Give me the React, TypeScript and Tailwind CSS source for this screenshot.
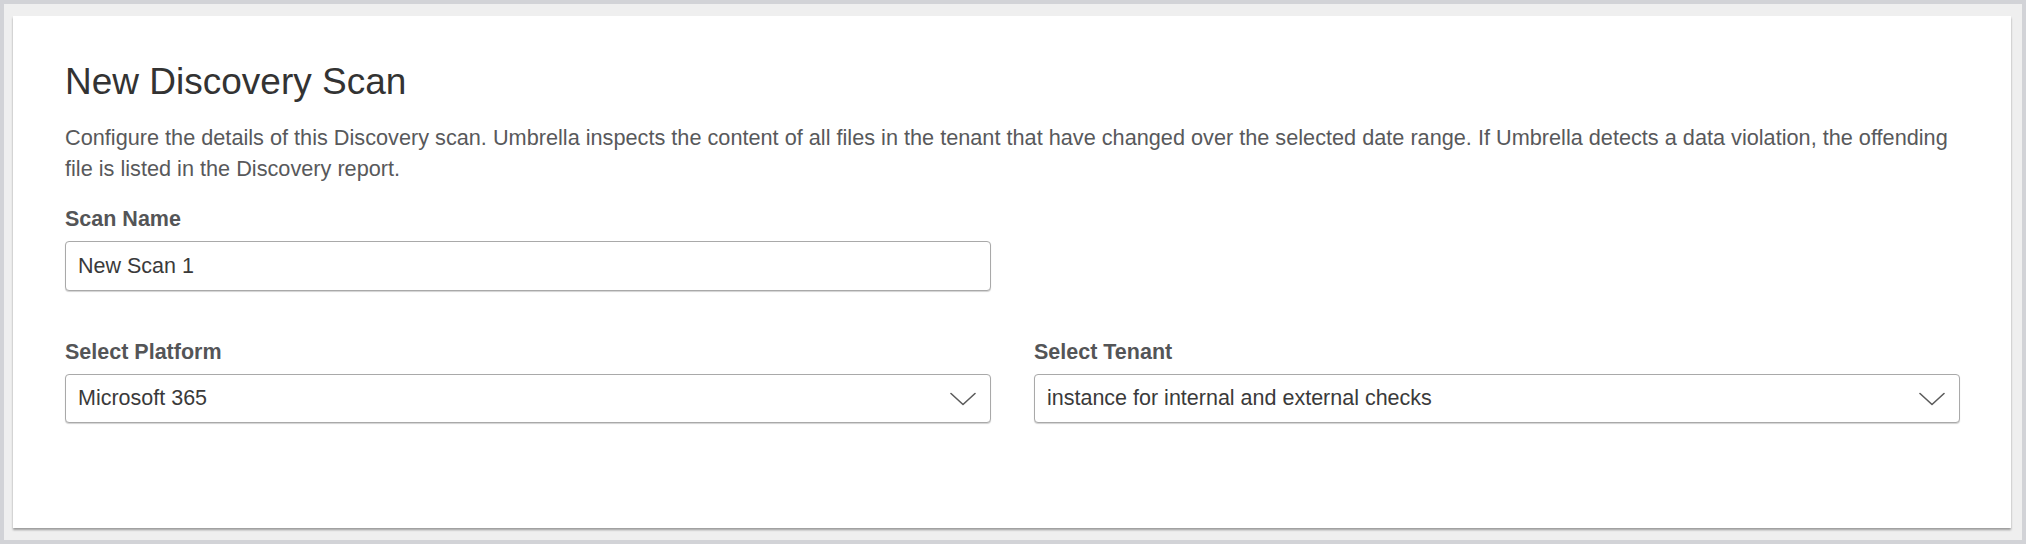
import React from 'react';

const font = { fontFamily: '"Liberation Sans", Arial, sans-serif' };

function Chevron() {
  return (
    <svg width="26" height="14" viewBox="0 0 26 14" fill="none" className="shrink-0">
      <polyline points="1,1.5 13,12.5 25,1.5" stroke="#5b5b5b" strokeWidth="1.6" strokeLinecap="round" strokeLinejoin="round" />
    </svg>
  );
}

function Field({ label, children }: { label: string; children: React.ReactNode }) {
  return (
    <div className="flex flex-col">
      <label className="text-[21.5px] leading-[26px] font-bold text-[#545557]">{label}</label>
      <div className="mt-[9px]">{children}</div>
    </div>
  );
}

function SelectBox({ value }: { value: string }) {
  return (
    <div className="h-[49px] flex items-center justify-between pl-[12px] pr-[14px] bg-white border border-[#a9a9a9] rounded-[4px] shadow-[0_1px_1px_rgba(0,0,0,0.18)]">
      <span className="text-[21.5px] text-[#3a3a3a]">{value}</span>
      <Chevron />
    </div>
  );
}

export default function App() {
  return (
    <div style={font} className="w-[2026px] h-[544px] border-4 border-[#d2d3d7] bg-[#efefef] pl-[9px] pr-[11px] pt-[12px] pb-[12px]">
      <div className="h-full bg-white shadow-[0_2px_2px_rgba(0,0,0,0.35)] pl-[52px] pr-[51px] pt-[44px]">
        <h1 className="text-[37px] leading-[44px] font-normal text-[#333333]">New Discovery Scan</h1>
        <div className="mt-[18px] text-[21.7px] leading-[31px] text-[#58595b]">
          <p className="whitespace-nowrap">
            Configure the details of this Discovery scan. Umbrella inspects the content of all files in the tenant that have changed over the selected date range. If Umbrella detects a data violation, the offending
          </p>
          <p className="whitespace-nowrap">file is listed in the Discovery report.</p>
        </div>

        <div className="mt-[22px] w-[926px]">
          <Field label="Scan Name">
            <div className="h-[50px] flex items-center pl-[12px] bg-white border border-[#a9a9a9] rounded-[4px] shadow-[0_1px_1px_rgba(0,0,0,0.18)]">
              <span className="text-[21.5px] text-[#3a3a3a]">New Scan 1</span>
            </div>
          </Field>
        </div>

        <div className="mt-[48px] grid grid-cols-2 gap-x-[43px]">
          <Field label="Select Platform">
            <SelectBox value="Microsoft 365" />
          </Field>
          <Field label="Select Tenant">
            <SelectBox value="instance for internal and external checks" />
          </Field>
        </div>
      </div>
    </div>
  );
}
